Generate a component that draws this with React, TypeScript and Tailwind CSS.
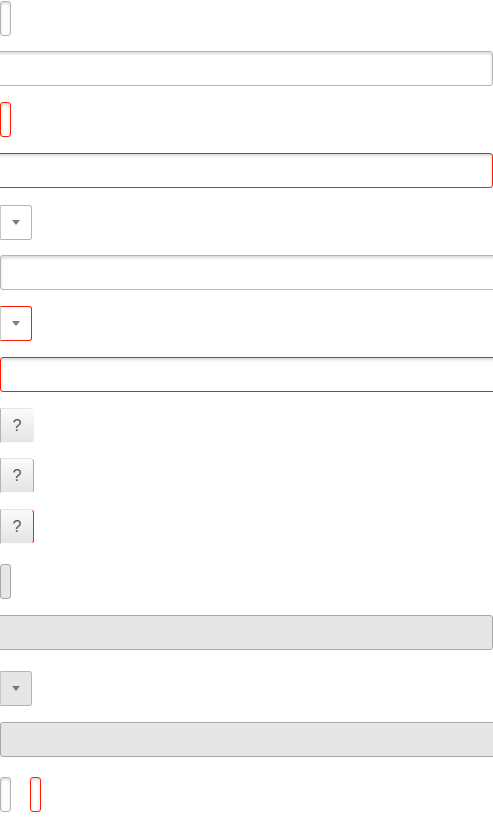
import React from 'react';

// Form control states: plain, invalid (red), with dropdown/help addons, disabled

const base = 'h-[35px] border rounded-[3px]';
const live = 'bg-white shadow-[inset_0_2px_3px_rgba(0,0,0,0.15)]';
const gray = `${live} border-[#b4b4b4]`;
const red = `${live} border-[#ff1a00]`;
const off = 'bg-[#e6e6e6] border-[#a8a8a8]';

const Caret: React.FC = () => (
  <svg width="8" height="5" viewBox="0 0 8 5" className="block">
    <path d="M0 0 L8 0 L4 5 Z" fill="#7a7a7a" />
  </svg>
);

const Dropdown: React.FC<{ tone: string; disabled?: boolean }> = ({ tone, disabled }) => (
  <div className={`w-[32px] h-[35px] flex items-center justify-center border border-l-[#c8c8c8] rounded-r-[3px] ${tone} ${disabled ? 'bg-[#e6e6e6]' : 'bg-white'}`}>
    <Caret />
  </div>
);

const Help: React.FC<{ edge: string }> = ({ edge }) => (
  <div className={`w-[34px] h-[35px] flex items-center justify-center border border-t-transparent border-b-transparent border-l-[#b4b4b4] rounded-r-[4px] bg-gradient-to-b from-[#fbfbfb] to-[#e4e4e4] text-[16px] text-[#555] ${edge}`}
    style={{ fontFamily: '"Liberation Sans", Arial, sans-serif' }}>
    ?
  </div>
);

export default function App() {
  return (
    <div className="w-[493px] h-[819px] overflow-hidden bg-white">
      <div className="flex flex-col">
        <div className={`mt-[1px] w-[11px] ${base} ${gray}`} />
        <div className={`mt-[15px] -ml-[10px] w-[503px] ${base} ${gray}`} />

        <div className={`mt-[16px] w-[11px] ${base} ${red}`} />
        <div className={`mt-[16px] -ml-[10px] w-[503px] ${base} ${red}`} />

        <div className="mt-[17px]"><Dropdown tone="border-t-[#b4b4b4] border-r-[#b4b4b4] border-b-[#b4b4b4]" /></div>
        <div className={`mt-[15px] w-[520px] ${base} ${gray}`} />

        <div className="mt-[16px]"><Dropdown tone="border-t-[#ff1a00] border-r-[#ff1a00] border-b-[#ff1a00]" /></div>
        <div className={`mt-[16px] w-[520px] ${base} ${red}`} />

        <div className="mt-[16px]"><Help edge="border-r-transparent" /></div>
        <div className="mt-[15px]"><Help edge="border-r-[#a8a8a8]" /></div>
        <div className="mt-[16px]"><Help edge="border-r-[#ff1a00]" /></div>

        <div className={`mt-[20px] w-[11px] ${base} ${off}`} />
        <div className={`mt-[16px] -ml-[10px] w-[503px] ${base} ${off}`} />

        <div className="mt-[21px]"><Dropdown tone="border-t-[#b4b4b4] border-r-[#b4b4b4] border-b-[#b4b4b4]" disabled /></div>
        <div className={`mt-[16px] w-[520px] ${base} ${off}`} />

        <div className="mt-[20px] flex gap-[19px]">
          <div className={`w-[11px] ${base} ${gray}`} />
          <div className={`w-[11px] ${base} ${red}`} />
        </div>
      </div>
    </div>
  );
}
